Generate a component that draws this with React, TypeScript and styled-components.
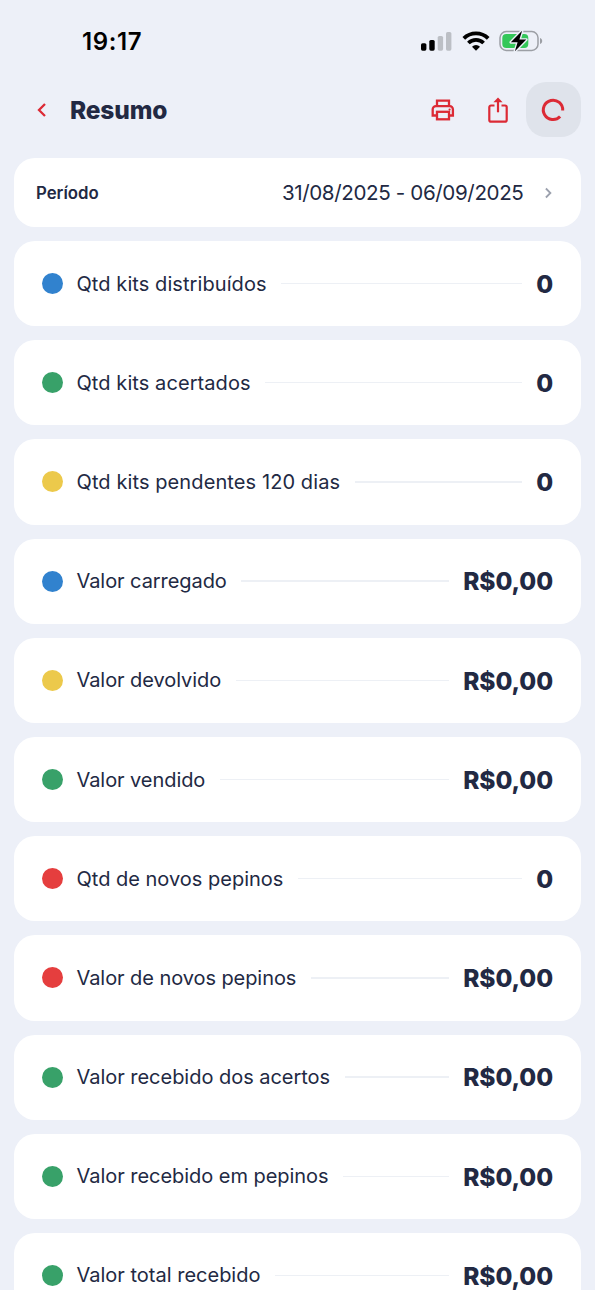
import React from "react";
import styled, { createGlobalStyle } from "styled-components";

const GlobalStyle = createGlobalStyle`
  * { box-sizing: border-box; }
  html, body { margin: 0; background: #edf0f8; }
  body { font-family: Inter, "Liberation Sans", sans-serif; color: #222943; overflow: hidden; }
`;

const Screen = styled.main`
  width: 595px;
  height: 1290px;
  overflow: hidden;
  background: #edf0f8;
`;

const StatusBar = styled.div`
  height: 82px;
  padding: 0 52px 0 82px;
  display: flex;
  align-items: center;
  justify-content: space-between;
  color: #000;
`;

const Clock = styled.span`
  font-size: 24px;
  line-height: 30px;
  font-weight: 600;
  letter-spacing: 0.6px;
  margin-top: 1px;
`;

const StatusIcons = styled.div`
  display: flex;
  align-items: center;
  height: 30px;
  margin-top: -1px;
  svg { display: block; }
`;

const Header = styled.header`
  height: 55px;
  padding: 0 14px 0 27.5px;
  display: flex;
  align-items: center;
`;

const IconButton = styled.button<{ $active?: boolean }>`
  width: 55px;
  height: 55px;
  padding: 0;
  border: 0;
  border-radius: 20px;
  display: flex;
  align-items: center;
  justify-content: center;
  color: #dc2a35;
  background: ${(p) => (p.$active ? "#dfe3eb" : "transparent")};
  svg { margin-left: -2px; }
`;

const BackButton = styled(IconButton)`
  width: 28px;
`;

const Title = styled.h1`
  flex: 1;
  margin: 0 0 0 14.5px;
  font-size: 24.5px;
  line-height: 34px;
  font-weight: 800;
  letter-spacing: -0.15px;
`;

const Content = styled.div`
  padding: 21px 14px 0;
  display: flex;
  flex-direction: column;
  gap: 14px;
`;

const Card = styled.section`
  flex: none;
  display: flex;
  align-items: center;
  background: #fff;
  border-radius: 21px;
`;

const PeriodCard = styled(Card)`
  height: 69px;
  padding: 0 26px 0 22px;
`;

const PeriodLabel = styled.span`
  flex: 1;
  font-size: 16.8px;
  font-weight: 600;
  margin-top: 1px;
`;

const PeriodValue = styled.span`
  font-size: 20.6px;
  letter-spacing: -0.38px;
  margin-right: 17.5px;
`;

const List = styled.div`
  display: flex;
  flex-direction: column;
  gap: 14px;
`;

const MetricCard = styled(Card)`
  height: 85.2px;
  padding: 0 28px 0 27.5px;
`;

const Dot = styled.span<{ $color: string }>`
  width: 21px;
  height: 21px;
  border-radius: 50%;
  background: ${(p) => p.$color};
`;

const MetricLabel = styled.span<{ $spacing: number }>`
  margin-left: 14px;
  font-size: 20px;
  letter-spacing: ${(p) => p.$spacing}px;
  white-space: nowrap;
`;

const Rule = styled.span`
  flex: 1;
  height: 1.4px;
  margin: 0 14.5px;
  background: #edf0f5;
`;

const MetricValue = styled.strong`
  font-size: 24.5px;
  font-weight: 800;
  letter-spacing: -0.1px;
  white-space: nowrap;
  margin-top: 0.6px;
`;

const BLUE = "#3182ce";
const GREEN = "#38a169";
const YELLOW = "#ecc94b";
const RED = "#e53e3e";

const metrics = [
  { label: "Qtd kits distribuídos", value: "0", color: BLUE, spacing: 0.08 },
  { label: "Qtd kits acertados", value: "0", color: GREEN, spacing: 0.08 },
  { label: "Qtd kits pendentes 120 dias", value: "0", color: YELLOW, spacing: 0.1 },
  { label: "Valor carregado", value: "R$0,00", color: BLUE, spacing: -0.07 },
  { label: "Valor devolvido", value: "R$0,00", color: YELLOW, spacing: -0.07 },
  { label: "Valor vendido", value: "R$0,00", color: GREEN, spacing: -0.07 },
  { label: "Qtd de novos pepinos", value: "0", color: RED, spacing: 0 },
  { label: "Valor de novos pepinos", value: "R$0,00", color: RED, spacing: -0.07 },
  { label: "Valor recebido dos acertos", value: "R$0,00", color: GREEN, spacing: -0.03 },
  { label: "Valor recebido em pepinos", value: "R$0,00", color: GREEN, spacing: -0.04 },
  { label: "Valor total recebido", value: "R$0,00", color: GREEN, spacing: 0 },
];

const SignalIcon = () => (
  <svg width="31" height="20" viewBox="0 0 31 20">
    <rect x="0" y="12.2" width="5.4" height="7.5" rx="1.6" />
    <rect x="8.3" y="9" width="5.4" height="10.7" rx="1.6" />
    <rect x="16.7" y="5" width="5.4" height="14.7" rx="1.6" fill="#bcbfc5" />
    <rect x="25" y="0.9" width="5.4" height="18.8" rx="1.6" fill="#bcbfc5" />
  </svg>
);

const WifiGlyph = styled.svg`
  margin: 0 9px 0 10px;
`;

const WifiIcon = () => (
  <WifiGlyph width="28" height="20" viewBox="0 0 28 20">
    <g fill="none" stroke="#000" strokeWidth="3.8">
      <path d="M1.8 7.3a17.4 17.4 0 0 1 24.4 0" />
      <path d="M6.4 12a11 11 0 0 1 15.2 0" />
    </g>
    <path d="M14 19.800l-4-4.100a5.800 5.800 0 0 1 8 0z" />
  </WifiGlyph>
);

const BatteryIcon = () => (
  <svg width="44" height="24" viewBox="0 0 44 24">
    <rect x="1" y="2.6" width="38" height="18.8" rx="6.2" fill="none" stroke="#9c9fa5" strokeWidth="1.5" />
    <path d="M41 9v6c1.5-.5 2.2-1.7 2.2-3s-.7-2.5-2.2-3z" fill="#9c9fa5" />
    <rect x="3.3" y="4.9" width="26" height="14.2" rx="4" fill="#34c759" />
    <path d="M23.1 1.8L11.8 13.3h6.8l-2.7 9L27.3 10.6h-6.9z" stroke="#edf0f8" strokeWidth="2.8" paintOrder="stroke" strokeLinejoin="round" />
  </svg>
);

const BackIcon = () => (
  <svg width="28" height="28" viewBox="0 0 28 28" fill="none" stroke="currentColor" strokeWidth="2.3">
    <path d="M18 8l-6 6 6 6" />
  </svg>
);

const PrintIcon = () => (
  <svg width="28" height="28" viewBox="0 0 28 28" fill="none" stroke="currentColor" strokeWidth="2.3">
    <path d="M8 10V4.7h12V10" />
    <path d="M8 19.5H3.7V13.3a3.2 3.2 0 0 1 3.2-3.2h13.800a3.200 3.200 0 0 1 3.200 3.200v6.200H20" />
    <rect x="8" y="15.800" width="12" height="7.500" />
    <circle cx="20.600" cy="13.600" r="1.100" fill="currentColor" stroke="none" />
  </svg>
);

const ShareIcon = () => (
  <svg width="28" height="28" viewBox="0 0 28 28" fill="none" stroke="currentColor" strokeWidth="2.2">
    <path d="M10.500 9.500H7a1.700 1.700 0 0 0-1.700 1.700v12.700A1.700 1.700 0 0 0 7 25.600h14a1.700 1.700 0 0 0 1.700-1.700V11.200A1.700 1.700 0 0 0 21 9.500h-3.500" />
    <path d="M14 16.300V4" />
    <path d="M9.400 6.300L14 1.500l4.600 4.800z" fill="currentColor" stroke="none" />
  </svg>
);

const SpinnerIcon = () => (
  <svg width="28" height="28" viewBox="0 0 28 28" fill="none" stroke="currentColor" strokeWidth="3">
    <path d="M23.700 14.500a9.700 9.700 0 1 0-2.600 6" />
  </svg>
);

const ChevronIcon = () => (
  <svg width="14" height="14" viewBox="0 0 14 14" fill="none" stroke="#9ba0ad" strokeWidth="1.8">
    <path d="M4.900 2.500L9.400 7l-4.500 4.500" />
  </svg>
);

export default function App() {
  return (
    <Screen>
      <GlobalStyle />
      <StatusBar>
        <Clock>19:17</Clock>
        <StatusIcons>
          <SignalIcon />
          <WifiIcon />
          <BatteryIcon />
        </StatusIcons>
      </StatusBar>
      <Header>
        <BackButton aria-label="Voltar"><BackIcon /></BackButton>
        <Title>Resumo</Title>
        <IconButton aria-label="Imprimir"><PrintIcon /></IconButton>
        <IconButton aria-label="Compartilhar"><ShareIcon /></IconButton>
        <IconButton aria-label="Atualizar" $active><SpinnerIcon /></IconButton>
      </Header>
      <Content>
        <PeriodCard>
          <PeriodLabel>Período</PeriodLabel>
          <PeriodValue>31/08/2025 - 06/09/2025</PeriodValue>
          <ChevronIcon />
        </PeriodCard>
        <List>
          {metrics.map((m) => (
            <MetricCard key={m.label}>
              <Dot $color={m.color} />
              <MetricLabel $spacing={m.spacing}>{m.label}</MetricLabel>
              <Rule />
              <MetricValue>{m.value}</MetricValue>
            </MetricCard>
          ))}
        </List>
      </Content>
    </Screen>
  );
}
